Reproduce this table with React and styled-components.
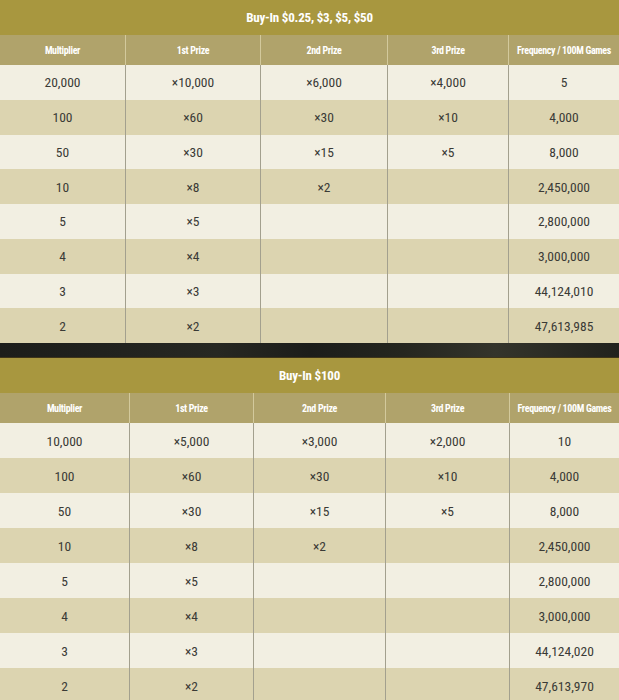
import styled, { createGlobalStyle } from 'styled-components';

const GlobalStyle = createGlobalStyle`
  body {
    margin: 0;
    background: #f2efe2;
    font-family: 'Roboto Condensed', 'Liberation Sans Narrow', 'DejaVu Sans Condensed', Roboto, sans-serif;
  }
`;

const Page = styled.div`
  width: 619px;
  display: flex;
  flex-direction: column;
`;

const Title = styled.div`
  height: 35px;
  background: #a8973f;
  color: #fff;
  font-weight: 700;
  font-size: 13px;
  letter-spacing: -0.2px;
  display: flex;
  align-items: center;
  justify-content: center;
`;

const Row = styled.div`
  display: grid;
  grid-template-columns: ${({ $cols }) => $cols};
  height: ${({ $h }) => $h};
  background: ${({ $bg }) => $bg};
`;

const HeadCell = styled.div`
  display: flex;
  align-items: center;
  justify-content: center;
  white-space: nowrap;
  color: #fff;
  font-weight: 700;
  font-size: 10px;
  letter-spacing: -0.35px;
  & + & {
    border-left: 1px solid #d3c99c;
  }
`;

const Cell = styled.div`
  display: flex;
  align-items: center;
  justify-content: center;
  color: #3a3a36;
  font-size: 13.5px;
  & + & {
    border-left: 1px solid #a3a08e;
  }
`;

const Band = styled.div`
  height: 14px;
  background: linear-gradient(90deg, #1c1d1a 0%, #22231f 20%, #272822 35%, #1c1d1a 50%, #25261f 65%, #34342b 80%, #21221d 100%);
  border-bottom: 1px solid #3e3419;
`;

const headers = ['Multiplier', '1st Prize', '2nd Prize', '3rd Prize', 'Frequency / 100M Games'];

const tables = [
  {
    title: 'Buy-In $0.25, $3, $5, $50',
    cols: '125px 135px 127px 121px 1fr',
    rowH: '34.75px',
    rows: [
      ['20,000', '×10,000', '×6,000', '×4,000', '5'],
      ['100', '×60', '×30', '×10', '4,000'],
      ['50', '×30', '×15', '×5', '8,000'],
      ['10', '×8', '×2', '', '2,450,000'],
      ['5', '×5', '', '', '2,800,000'],
      ['4', '×4', '', '', '3,000,000'],
      ['3', '×3', '', '', '44,124,010'],
      ['2', '×2', '', '', '47,613,985'],
    ],
  },
  {
    title: 'Buy-In $100',
    cols: '129px 124px 132px 124px 1fr',
    rowH: '35px',
    rows: [
      ['10,000', '×5,000', '×3,000', '×2,000', '10'],
      ['100', '×60', '×30', '×10', '4,000'],
      ['50', '×30', '×15', '×5', '8,000'],
      ['10', '×8', '×2', '', '2,450,000'],
      ['5', '×5', '', '', '2,800,000'],
      ['4', '×4', '', '', '3,000,000'],
      ['3', '×3', '', '', '44,124,020'],
      ['2', '×2', '', '', '47,613,970'],
    ],
  },
];

function PrizeTable({ title, cols, rowH, rows }) {
  return (
    <div>
      <Title>{title}</Title>
      <Row $cols={cols} $h="30px" $bg="#b0a36b">
        {headers.map((h) => (
          <HeadCell key={h}>{h}</HeadCell>
        ))}
      </Row>
      {rows.map((r, i) => (
        <Row key={i} $cols={cols} $h={rowH} $bg={i % 2 ? '#dcd4b0' : '#f2efe2'}>
          {r.map((v, j) => (
            <Cell key={j}>{v}</Cell>
          ))}
        </Row>
      ))}
    </div>
  );
}

export default function App() {
  return (
    <Page>
      <GlobalStyle />
      <PrizeTable {...tables[0]} />
      <Band />
      <PrizeTable {...tables[1]} />
    </Page>
  );
}
